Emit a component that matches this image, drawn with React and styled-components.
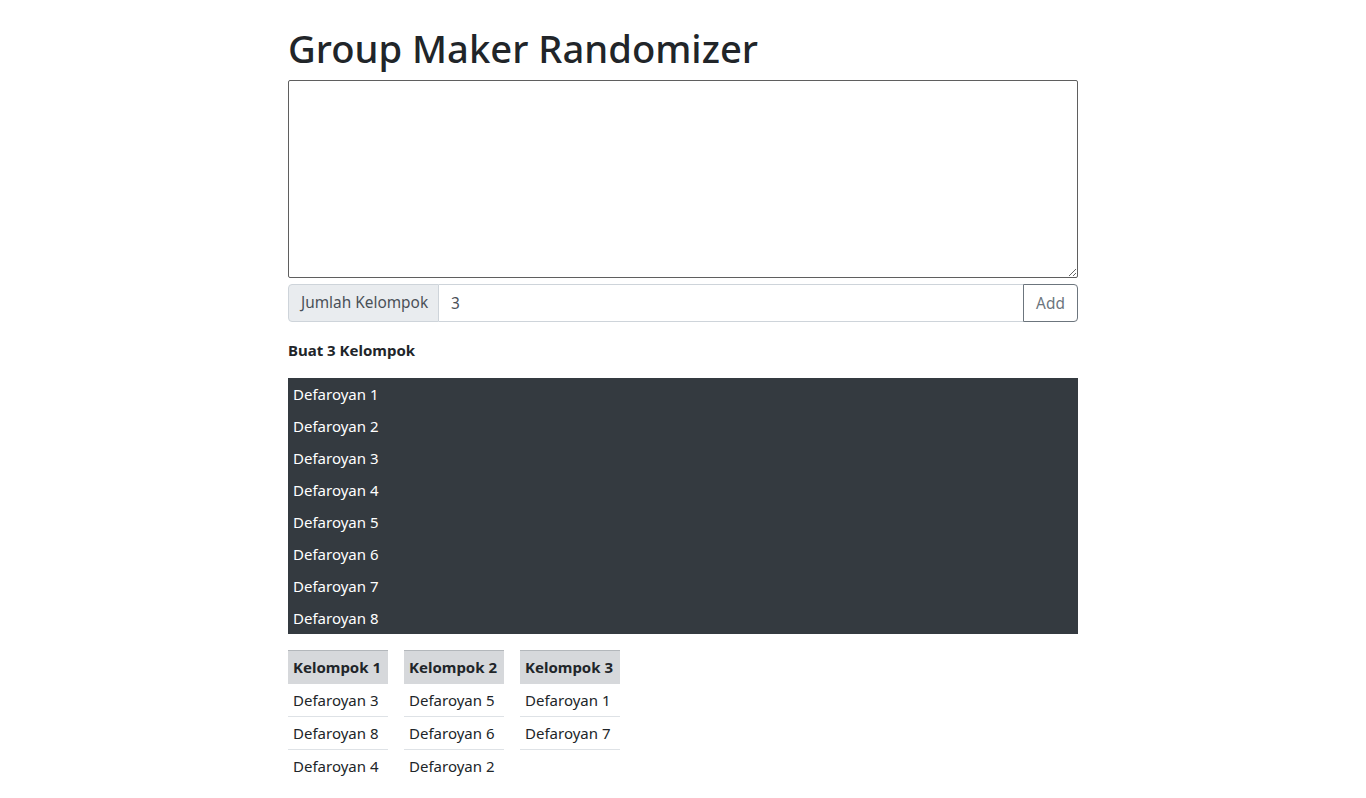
import styled, { createGlobalStyle } from "styled-components";

const GlobalStyle = createGlobalStyle`
  body {
    margin: 0;
    background: #ffffff;
    color: #212529;
    font-family: "Noto Sans", "Open Sans", sans-serif;
    font-size: 16px;
    line-height: 1.5;
  }
  * { box-sizing: border-box; }
`;

const names = [
  "Defaroyan 1",
  "Defaroyan 2",
  "Defaroyan 3",
  "Defaroyan 4",
  "Defaroyan 5",
  "Defaroyan 6",
  "Defaroyan 7",
  "Defaroyan 8",
];

const groups = [
  ["Defaroyan 3", "Defaroyan 8", "Defaroyan 4"],
  ["Defaroyan 5", "Defaroyan 6", "Defaroyan 2"],
  ["Defaroyan 1", "Defaroyan 7", ""],
];

const App = () => {
  return (
    <>
      <GlobalStyle />
      <Container>
        <Title>Group Maker Randomizer</Title>
        <NamesArea />
        <InputGroup>
          <Prepend>Jumlah Kelompok</Prepend>
          <NumberInput defaultValue="3" />
          <AddButton>Add</AddButton>
        </InputGroup>
        <Summary>Buat 3 Kelompok</Summary>
        <NameList>
          {names.map((n) => (
            <NameRow key={n}>{n}</NameRow>
          ))}
        </NameList>
        <Groups>
          {groups.map((g, i) => (
            <GroupTable key={i}>
              <thead>
                <tr>
                  <HeadCell>Kelompok {i + 1}</HeadCell>
                </tr>
              </thead>
              <tbody>
                {g.map((m, j) => (
                  <tr key={j}>
                    <Cell $first={j === 0}>{m}</Cell>
                  </tr>
                ))}
              </tbody>
            </GroupTable>
          ))}
        </Groups>
      </Container>
    </>
  );
};

export default App;

const Container = styled.div`
  width: 790px;
  margin: 0 auto;
  padding-top: 24px;
`;

const Title = styled.h1`
  margin: 0 0 8px;
  font-size: 38.2px;
  font-weight: 500;
  line-height: 48px;
  color: #212529;
`;

const NamesArea = styled.textarea`
  display: block;
  width: 100%;
  height: 198px;
  border: 1px solid #5f5f5f;
  border-radius: 2px;
  margin: 0;
  padding: 2px;
  font-family: inherit;
`;

const InputGroup = styled.div`
  display: flex;
  margin-top: 6px;
  height: 38px;
`;

const Prepend = styled.span`
  display: flex;
  align-items: center;
  width: 151px;
  padding: 0 12px;
  background: #e9ecef;
  border: 1px solid #ced4da;
  border-radius: 4px 0 0 4px;
  color: #495057;
  font-size: 15.4px;
  white-space: nowrap;
`;

const NumberInput = styled.input`
  flex: 1;
  min-width: 0;
  border: 1px solid #ced4da;
  border-left: none;
  border-right: none;
  padding: 0 12px;
  font-family: inherit;
  font-size: 15.4px;
  color: #495057;
  outline: none;
`;

const AddButton = styled.button`
  width: 55px;
  border: 1px solid #6c757d;
  background: #ffffff;
  color: #6c757d;
  border-radius: 0 4px 4px 0;
  padding: 0;
  font-family: inherit;
  font-size: 15.4px;
  cursor: pointer;
`;

const Summary = styled.p`
  margin: 16px 0 16px;
  font-weight: 700;
  font-size: 15px;
  line-height: 24px;
`;

const NameList = styled.div`
  background: #343a40;
  color: #ffffff;
`;

const NameRow = styled.div`
  height: 32px;
  line-height: 32px;
  padding-left: 5px;
  font-size: 15px;
`;

const Groups = styled.div`
  display: flex;
  gap: 16px;
  margin-top: 16px;
  align-items: flex-start;
`;

const GroupTable = styled.table`
  border-collapse: collapse;
  font-size: 15px;
  min-width: 100px;
`;

const HeadCell = styled.th`
  text-align: left;
  font-weight: 700;
  height: 33px;
  padding: 0 5px;
  background: #d6d8db;
  border-top: 1px solid #b3b7bb;
  white-space: nowrap;
`;

const Cell = styled.td`
  height: 33px;
  padding: 0 5px;
  white-space: nowrap;
  border-top: ${(p) => (p.$first ? "none" : "1px solid #dee2e6")};
`;
